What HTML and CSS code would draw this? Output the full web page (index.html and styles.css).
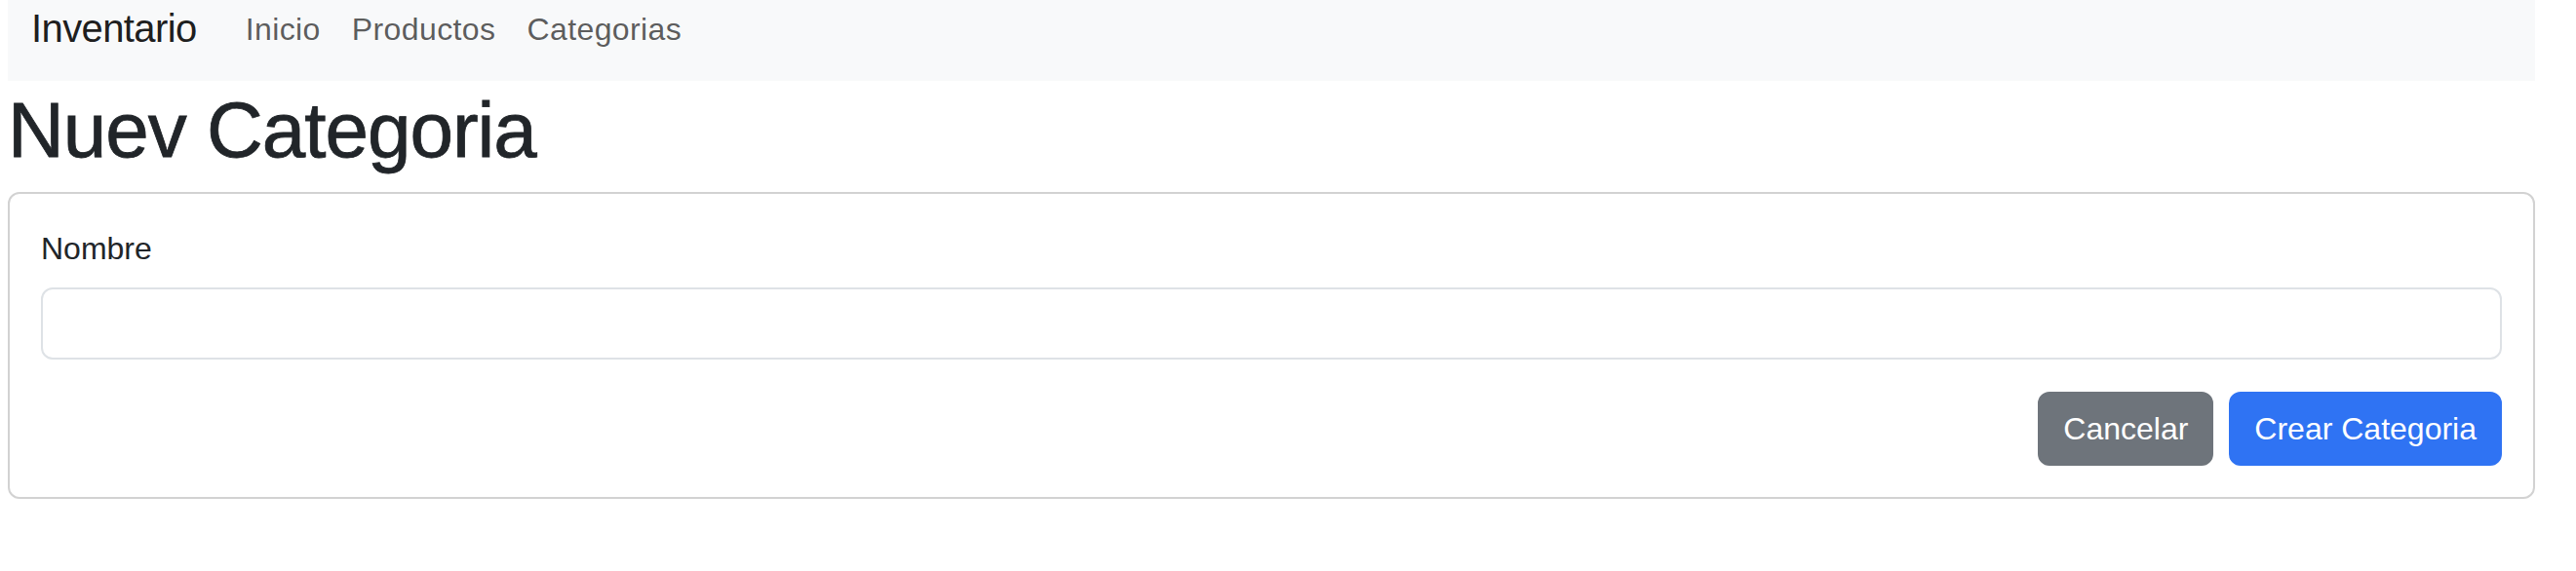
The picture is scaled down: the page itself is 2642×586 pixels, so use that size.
FILE: index.html
```html
<!DOCTYPE html>
<html lang="es">
<head>
<meta charset="utf-8">
<title>Nuev Categoria</title>
<link rel="stylesheet" href="styles.css">
</head>
<body>
<div class="page">
  <nav class="navbar">
    <a class="brand" href="#">Inventario</a>
    <ul class="nav">
      <li><a class="nav-link" href="#">Inicio</a></li>
      <li><a class="nav-link" href="#">Productos</a></li>
      <li><a class="nav-link" href="#">Categorias</a></li>
    </ul>
  </nav>
  <h1 class="title">Nuev Categoria</h1>
  <div class="card">
    <form class="card-body">
      <label class="label" for="nombre">Nombre</label>
      <input class="input" id="nombre" type="text">
      <div class="actions">
        <button type="button" class="btn btn-secondary">Cancelar</button>
        <button type="submit" class="btn btn-primary">Crear Categoria</button>
      </div>
    </form>
  </div>
</div>
</body>
</html>
```
FILE: styles.css
```css
* { box-sizing: border-box; }
html, body { margin: 0; padding: 0; background: #fff; }
body {
  font-family: "Liberation Sans", Arial, sans-serif;
  color: #212529;
}
.page {
  width: 2592px;
  margin-left: 8px;
}
.navbar {
  display: flex;
  align-items: flex-start;
  height: 83px;
  background: #f8f9fa;
  padding-left: 24px;
}
.brand {
  font-size: 40px;
  line-height: 58px;
  letter-spacing: -0.6px;
  color: rgba(0, 0, 0, 0.9);
  text-decoration: none;
  margin-right: 34px;
}
.nav {
  display: flex;
  list-style: none;
  margin: 0;
  padding: 0;
}
.nav-link {
  display: block;
  font-size: 32px;
  line-height: 58px;
  letter-spacing: 0.4px;
  padding: 1px 16px 0;
  color: rgba(0, 0, 0, 0.65);
  text-decoration: none;
}
.title {
  font-size: 80px;
  font-weight: 400;
  line-height: 96px;
  letter-spacing: -1px;
  -webkit-text-stroke: 0.8px #212529;
  margin: 3px 0 15px;
  color: #212529;
}
.card {
  border: 2px solid #d2d2d2;
  border-radius: 12px;
  background: #fff;
}
.card-body {
  display: flex;
  flex-direction: column;
  padding: 32px 32px 32px;
  margin: 0;
}
.label {
  font-size: 32px;
  line-height: 48px;
  margin-bottom: 16px;
}
.input {
  display: block;
  width: 100%;
  height: 74px;
  border: 2px solid #dee2e6;
  border-radius: 12px;
  background: #fff;
  font-family: inherit;
  font-size: 32px;
  padding: 12px 24px;
  margin: 0;
}
.actions {
  display: flex;
  justify-content: flex-end;
  gap: 16px;
  margin-top: 33px;
}
.btn {
  font-family: inherit;
  font-size: 32px;
  line-height: 48px;
  padding: 12px 24px;
  border: 2px solid transparent;
  border-radius: 12px;
  color: #fff;
  cursor: pointer;
}
.btn-secondary { background: #6e747b; border-color: #6e747b; }
.btn-primary { background: #2f73f3; border-color: #2f73f3; }
```
